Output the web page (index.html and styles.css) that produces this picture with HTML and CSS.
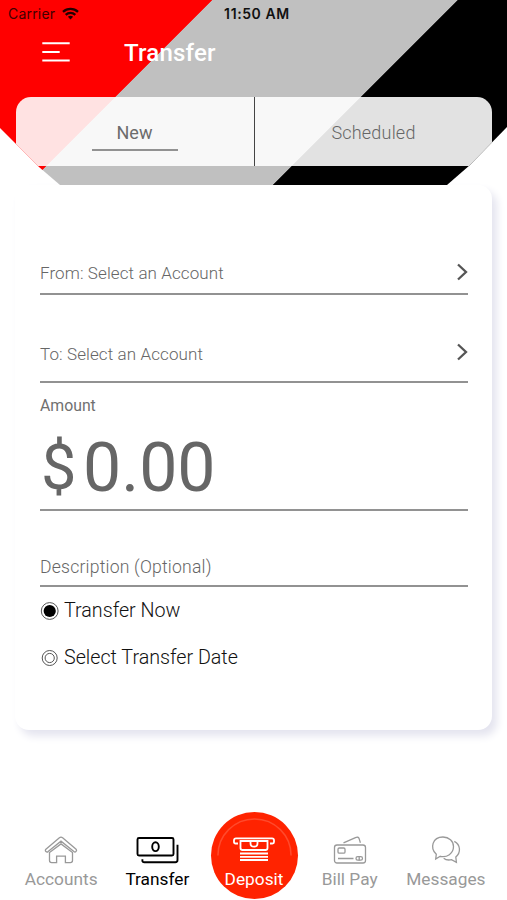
FILE: index.html
```html
<!DOCTYPE html>
<html lang="en">
<head>
<meta charset="utf-8">
<title>Transfer</title>
<link rel="stylesheet" href="styles.css">
</head>
<body>
<div class="app">
  <header class="header">
    <div class="status">
      <span class="carrier">Carrier
        <svg width="17" height="13" viewBox="0 0 17 13" fill="none" stroke="currentColor" stroke-width="2.3"><path d="M1 4.800C5.200.9 11.800.9 16 4.800M3.700 7.800c2.700-2.500 6.900-2.500 9.600 0"/><path d="M8.500 12.400 5.900 9.800c1.500-1.300 3.700-1.300 5.200 0z" fill="currentColor" stroke="none"/></svg>
      </span>
      <span class="clock">11:50 AM</span>
    </div>
    <div class="titlebar">
      <svg class="menu" width="28" height="20" viewBox="0 0 28 20" stroke="#fff" stroke-width="2"><path d="M.3 1.200h27.400M.3 10h17.400M.3 18.600h27.400"/></svg>
      <h1>Transfer</h1>
    </div>
    <nav class="tabs">
      <div class="tab active"><span>New</span></div>
      <div class="tab"><span>Scheduled</span></div>
    </nav>
  </header>
  <main class="card">
    <div class="field from"><span>From: Select an Account</span><svg width="12" height="20" viewBox="0 0 12 20"><path d="m2 2.500 8 7.500L2 17.500"/></svg></div>
    <div class="field to"><span>To: Select an Account</span><svg width="12" height="20" viewBox="0 0 12 20"><path d="m2 2.500 8 7.500L2 17.500"/></svg></div>
    <div class="field amount"><label>Amount</label><div class="value"><span class="currency">$</span><span>0.00</span></div></div>
    <div class="field description"><span>Description (Optional)</span></div>
    <div class="option"><svg width="20" height="20" viewBox="0 0 20 20"><circle cx="9.700" cy="10" r="8.400" fill="#fff" stroke="#555"/><circle cx="9.700" cy="10" r="6.100"/></svg><span>Transfer Now</span></div>
    <div class="option later"><svg width="20" height="20" viewBox="0 0 20 20" fill="none" stroke="#555"><circle cx="9.700" cy="10" r="7.500"/><circle cx="9.700" cy="10" r="4.600"/></svg><span>Select Transfer Date</span></div>
  </main>
  <footer class="nav">
    <div class="item"><svg width="36" height="30" viewBox="0 0 36 30"><path d="M2.900 15.300 16.400 3.800q1.600-1.300 3.200 0l13.500 11.500q1 1 0 2.100t-2.200.2L18 7.200 5.100 17.600q-1.100.8-2.200-.2t0-2.100zM6.500 18.500v8q0 2.100 2.100 2.100h5v-6.400h8.800v6.400h5q2.100 0 2.100-2.100v-8L18 9.900z"/></svg><span>Accounts</span></div>
    <div class="item current"><svg width="44" height="30" viewBox="0 0 44 30"><rect x="2.500" y="4" width="36" height="17.500" rx="1.500"/><ellipse cx="20.500" cy="12.700" rx="3.300" ry="4.400"/><path d="M42.500 10.800V26q0 2.200-2.200 2.200H9.400q-2 0-2-1.500v-1.400"/></svg><span>Transfer</span></div>
    <div class="item deposit"><svg class="arc" width="87" height="87" viewBox="0 0 88 88"><path d="M7 44a37 37 0 0 1 74 0"/></svg><svg width="44" height="30" viewBox="0 0 44 30"><path d="M6 9.500H3.500Q2 9.500 2 8V6.300q0-2 2-2h36q2 0 2 2V8q0 1.500-1.500 1.500H38M8.500 7v7q0 2 2 2h23q2 0 2-2V7zM18.500 7.500v1.700q0 3.500 3.500 3.500t3.500-3.500V7.500"/><path d="M8 19.500h28M8 22.800h28M8 26h28"/></svg><span>Deposit</span></div>
    <div class="item"><svg width="36" height="30" viewBox="0 0 36 30"><rect x="2.500" y="11" width="31" height="18" rx="2.500"/><path d="m11.500 8.800 12-5.200q2.700-1.200 3.600 1l1.300 4.200M6 24.500h15.500"/><rect x="6" y="14" width="7" height="5.200" rx="1.300"/><rect x="24" y="22.700" width="6.500" height="3.500" rx="1.700"/><path d="M27.200 22.500v4"/></svg><span>Bill Pay</span></div>
    <div class="item"><svg width="36" height="30" viewBox="0 0 36 30"><path d="M7.700 25 8.300 20.300C1.700 14.300 4.200 3 15 3c6 0 10.500 4 10.500 9.500 0 7-6.700 11.500-13.200 9.800zM26.300 7.300c6.500 3.400 6.700 11.400 1.500 15.700l.6 5.300-4.900-2.600c-3.300.7-5.700.4-7.800-1.500"/></svg><span>Messages</span></div>
  </footer>
</div>
</body>
</html>
```
FILE: styles.css
```css
* { box-sizing: border-box; }
body { margin: 0; background: #fff; font-family: Roboto, "Liberation Sans", sans-serif; }
.app { width: 507px; height: 900px; display: flex; flex-direction: column; overflow: hidden; }
svg { display: block; flex: none; }
.header {
  height: 185px; flex: none;
  background: linear-gradient(135deg, #f00 149.800px, #c0c0c0 150.400px, #c0c0c0 323.400px, #000 324px);
  clip-path: polygon(0 0, 100% 0, 507px 127px, 470px 165px, 447px 185px, 60px 185px, 39px 167px, 0 128px);
}
.status { height: 28px; display: grid; grid-template-columns: 1fr auto 1fr; align-items: center; padding: 0 8px 2px; font-family: Inter, sans-serif; font-size: 14px; color: #111; }
.carrier { display: flex; align-items: center; gap: 7px; letter-spacing: .2px; color: #410000; }
.carrier svg { color: #200; }
.clock { font-weight: 600; padding-left: 7px; letter-spacing: .6px; }
.titlebar { height: 69px; display: flex; padding: 14px 0 0 42px; gap: 54px; }
h1 { margin: -4px 0 0; font-size: 24px; line-height: 30px; font-weight: 500; color: #fff; letter-spacing: .2px; }
.tabs { display: flex; height: 69px; margin: 0 15px 0 16px; border-radius: 15px 15px 0 0; background: rgba(255,255,255,.886); overflow: hidden; }
.tab { flex: 1; display: flex; justify-content: center; align-items: flex-start; padding-top: 23px; font-size: 18px; line-height: 26px; font-weight: 300; color: #666; letter-spacing: .2px; }
.tab.active { padding-right: 1px; border-right: 1px solid #444; font-weight: 400; color: #6c6c6c; letter-spacing: 0; }
.tab.active span { width: 86px; height: 31px; text-align: center; border-bottom: 2px solid #929292; }
.card { width: 477px; height: 545px; margin: 0 15px; padding: 0 24px 0 25px; border-radius: 14px; background: #fff; box-shadow: 5px 6px 9px #e4e4ef; flex: none; }
.field { display: flex; justify-content: space-between; border-bottom: 2px solid #929292; font-size: 17px; line-height: 22px; font-weight: 300; color: #666; letter-spacing: .1px; }
.field path { fill: none; stroke: #555; stroke-width: 2.300; }
.from { height: 110px; padding-top: 77px; }
.to { height: 88px; padding-top: 48px; }
.to svg { margin-top: -1px; }
.amount { height: 128px; display: block; padding-top: 12px; }
.amount label { display: block; font-size: 15.800px; font-weight: 400; letter-spacing: 0; color: #707070; }
.value { display: flex; padding-top: 11px; font-size: 68px; line-height: 80px; font-weight: 400; color: #666; letter-spacing: 0; }
.currency { width: 43px; padding-left: 1px; font-size: 63px; }
.description { height: 76px; padding-top: 45px; font-size: 17.600px; letter-spacing: .2px; }
.option { display: flex; align-items: center; gap: 4px; height: 47px; font-size: 19.700px; font-weight: 300; color: #111; }
.nav { flex: none; display: flex; height: 88px; margin: 82px 13px 0; }
.item { flex: 1; display: flex; flex-direction: column; align-items: center; padding-top: 22px; font-size: 17.300px; line-height: 24px; color: #999; position: relative; }
.item svg { fill: none; stroke: #999; stroke-width: 1.300; margin-bottom: 3px; }
.item.current { color: #000; }
.item.current svg { stroke: #000; stroke-width: 1.900; }
.item.deposit { flex: 0 0 87px; height: 87px; margin: 0 4px 0 5px; border-radius: 50%; background: #ff2300; color: #fff; }
.item.deposit svg { stroke: #fff; stroke-width: 1.800; }
.item.deposit .arc { position: absolute; top: 0; left: 0; stroke: #ff4a2c; stroke-width: 1.500; }
```
